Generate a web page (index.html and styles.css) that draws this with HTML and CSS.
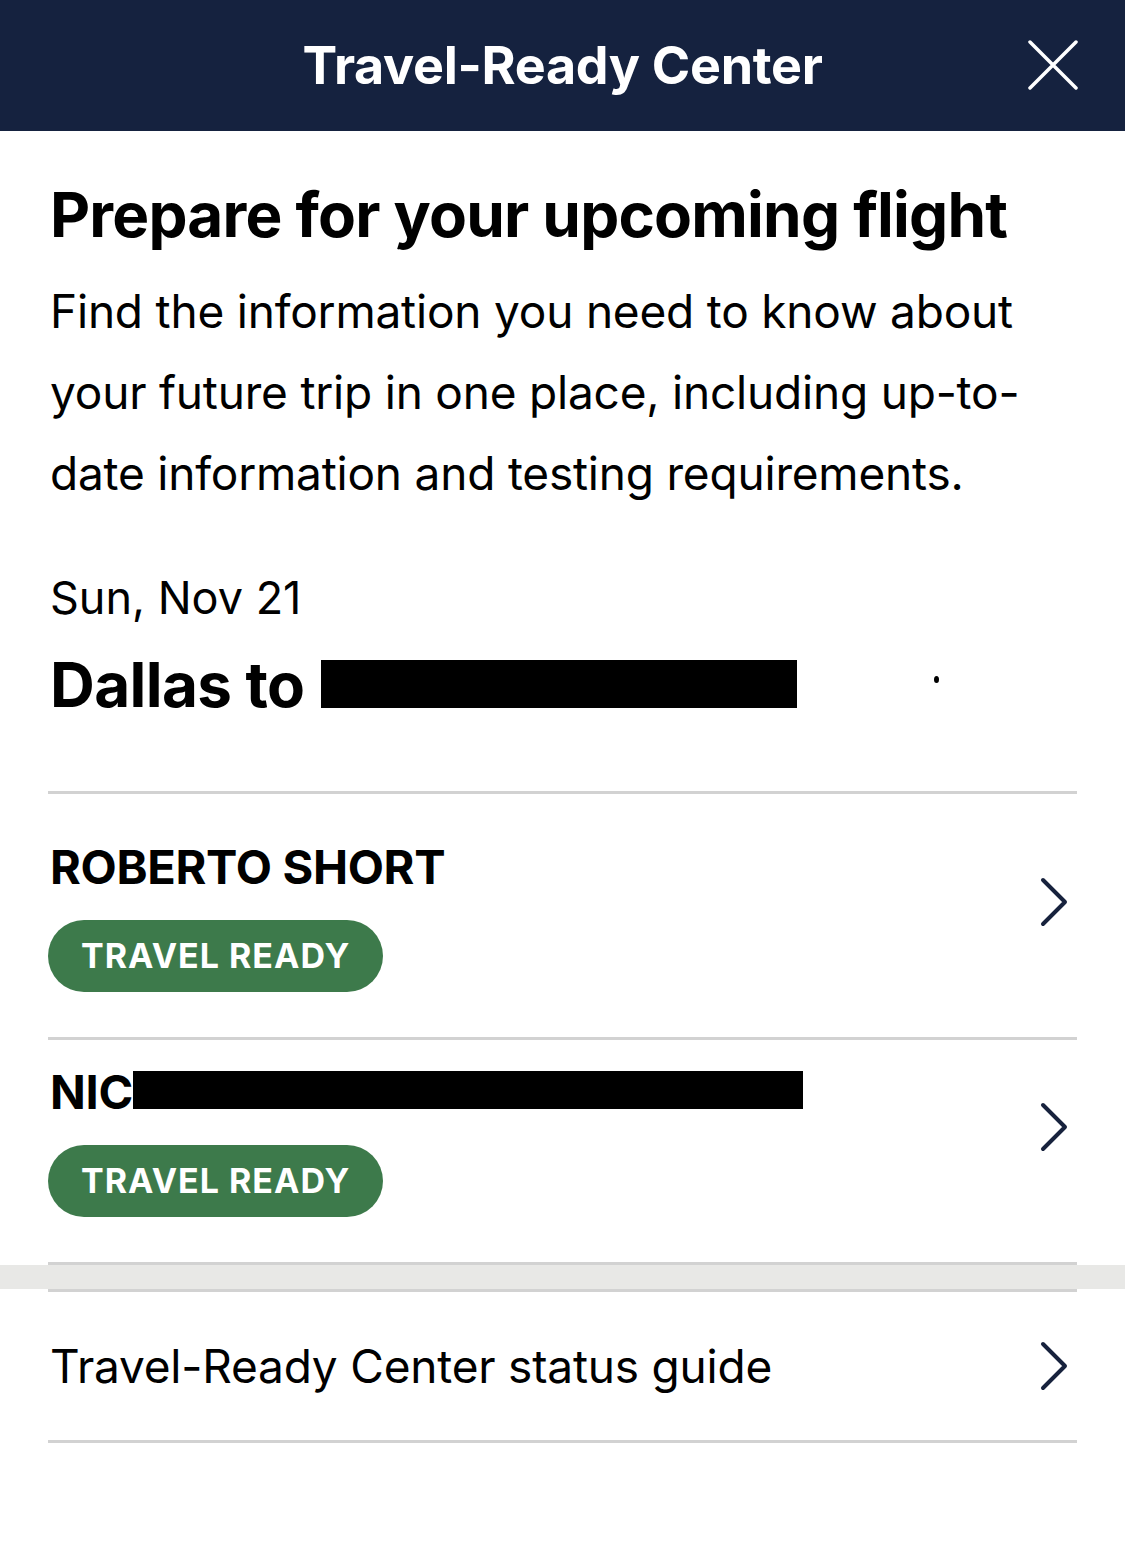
FILE: index.html
```html
<!DOCTYPE html>
<html lang="en">
<head>
  <meta charset="UTF-8" />
  <meta name="viewport" content="width=device-width, initial-scale=1.0" />
  <title>Travel-Ready Center</title>
  <link rel="stylesheet" href="styles.css">
</head>
<body>
  <header class="topbar">
    <h1>Travel-Ready Center</h1>
    <button class="close" aria-label="Close">
      <svg width="50" height="50" viewBox="0 0 50 50"><path d="M2 2 L48 48 M48 2 L2 48" stroke="#fff" stroke-width="3.5" stroke-linecap="round" fill="none"/></svg>
    </button>
  </header>

  <main class="content">
    <h2 class="title">Prepare for your upcoming flight</h2>
    <p class="intro">Find the information you need to know about your future trip in one place, including up-to-date information and testing requirements.</p>

    <div class="trip">
      <div class="date">Sun, Nov 21</div>
      <div class="route">Dallas to <span class="redact route-redact"></span><span class="dot"></span></div>
    </div>

    <div class="list">
      <div class="row passenger first">
        <div class="row-main">
          <div class="name">ROBERTO SHORT</div>
          <span class="badge">TRAVEL READY</span>
        </div>
        <svg class="chev" width="30" height="50" viewBox="0 0 30 50"><path d="M5 3 L27 25 L5 47" stroke="#17223d" stroke-width="4" stroke-linecap="round" stroke-linejoin="round" fill="none"/></svg>
      </div>
      <div class="row passenger">
        <div class="row-main">
          <div class="name">NIC<span class="redact name-redact"></span></div>
          <span class="badge">TRAVEL READY</span>
        </div>
        <svg class="chev" width="30" height="50" viewBox="0 0 30 50"><path d="M5 3 L27 25 L5 47" stroke="#17223d" stroke-width="4" stroke-linecap="round" stroke-linejoin="round" fill="none"/></svg>
      </div>
    </div>
  </main>

  <div class="band"></div>

  <div class="guide">
    <div class="row guide-row">
      <span>Travel-Ready Center status guide</span>
      <svg class="chev" width="30" height="50" viewBox="0 0 30 50"><path d="M5 3 L27 25 L5 47" stroke="#17223d" stroke-width="4" stroke-linecap="round" stroke-linejoin="round" fill="none"/></svg>
    </div>
  </div>
</body>
</html>
```

FILE: styles.css
```css
body {
  margin: 0;
  font-family: Inter, "Liberation Sans", sans-serif;
  color: #000;
  background: #fff;
}

.topbar {
  height: 131px;
  background: #15223f;
  display: flex;
  align-items: center;
  justify-content: center;
  position: relative;
}

.topbar h1 {
  margin: 0;
  color: #fff;
  font-size: 52px;
  font-weight: 700;
  letter-spacing: -0.3px;
}

.close {
  position: absolute;
  right: 47px;
  top: 40px;
  background: none;
  border: none;
  padding: 0;
  width: 50px;
  height: 50px;
}

.content {
  padding: 0 48px;
}

.title {
  margin: 48px 0 0 2px;
  font-size: 62px;
  font-weight: 700;
  letter-spacing: -0.8px;
  line-height: 72px;
}

.intro {
  margin: 20px 0 0 2px;
  max-width: 990px;
  font-size: 46px;
  line-height: 81px;
  letter-spacing: -0.2px;
}

.trip {
  margin: 56px 0 0 2px;
}

.date {
  font-size: 45px;
  line-height: 56px;
}

.route {
  font-size: 62px;
  font-weight: 700;
  letter-spacing: -0.6px;
  line-height: 72px;
  margin-top: 23px;
  display: flex;
  align-items: center;
}

.redact {
  display: inline-block;
  background: #000;
}

.route-redact {
  width: 476px;
  height: 48px;
  margin: -2px 0 0 16px;
}

.dot {
  width: 5px;
  height: 7px;
  border-radius: 50%;
  background: #000;
  margin: -12px 0 0 137px;
}

.list {
  margin-top: 70px;
  border-top: 3px solid #d2d2d2;
}

.row {
  display: flex;
  justify-content: space-between;
  border-bottom: 3px solid #d2d2d2;
}

.passenger {
  align-items: flex-start;
  padding: 24px 0 45px;
}

.passenger.first {
  padding-top: 45px;
}

.row-main {
  padding-left: 2px;
}

.name {
  font-size: 47px;
  font-weight: 700;
  line-height: 56px;
  letter-spacing: -0.3px;
  display: flex;
  align-items: center;
}

.name-redact {
  width: 670px;
  height: 38px;
  margin-left: 0;
  margin-top: -4px;
}

.badge {
  display: inline-block;
  margin: 25px 0 0 -2px;
  padding: 0 33px;
  height: 72px;
  line-height: 72px;
  border-radius: 36px;
  background: #3d7a4b;
  color: #fff;
  font-size: 34px;
  font-weight: 700;
  letter-spacing: 1px;
}

.chev {
  margin-right: 9px;
}

.passenger .chev {
  margin-top: 38px;
}

.band {
  height: 24px;
  background: #e8e8e6;
}

.guide {
  padding: 0 48px;
}

.guide-row {
  align-items: center;
  border-top: 3px solid #d2d2d2;
  height: 148px;
  font-size: 46px;
  letter-spacing: -0.2px;
  padding-left: 2px;
}
```
